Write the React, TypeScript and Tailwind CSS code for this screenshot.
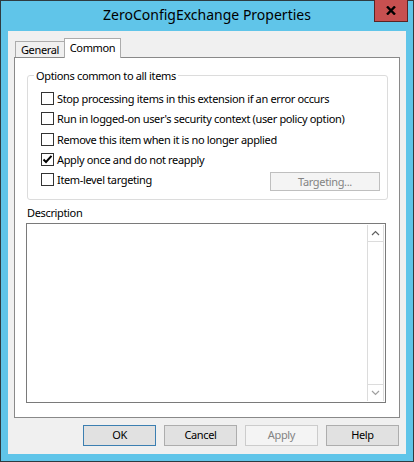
import React from "react";

function Checkbox({ checked }: { checked?: boolean }) {
  return (
    <div className="w-[13px] h-[13px] border border-[#333333] bg-white flex items-center justify-center shrink-0">
      {checked && (
        <svg width="11" height="11" viewBox="0 0 11 11">
          <path d="M1.5 5.5 L4 8 L9.5 1.8" fill="none" stroke="#000" strokeWidth="2" />
        </svg>
      )}
    </div>
  );
}

function Row({ label, checked, className }: { label: string; checked?: boolean; className: string }) {
  return (
    <div className={"flex items-center h-[13px] " + className}>
      <Checkbox checked={checked} />
      <span className="ml-[3px] leading-[13px] whitespace-nowrap">{label}</span>
    </div>
  );
}

export default function App() {
  return (
    <div className="w-[414px] h-[462px] bg-[#60c5e9] border border-[#2e3b40] flex flex-col font-['Noto_Sans','DejaVu_Sans',sans-serif] text-[11px] tracking-[-0.35px] text-black">
      <div className="relative h-[30px] flex items-center justify-center">
        <span className="text-[14px] tracking-normal leading-[18px] pb-[2px]">ZeroConfigExchange Properties</span>
        <div className="absolute right-[5px] top-[-1px] w-[34px] h-[22px] bg-[#c75050] border border-t-0 border-[#5a2424] flex items-center justify-center">
          <svg width="10" height="9" viewBox="0 0 10 9">
            <path d="M1 0.5 L9 8.5 M9 0.5 L1 8.5" stroke="#000" strokeWidth="2.4" />
          </svg>
        </div>
      </div>
      <div className="mx-[7px] h-[423px] bg-[#f0f0f0] flex flex-col">
        <div className="mt-[7px] ml-[7px] h-[19px] flex items-end">
          <div className="w-[49px] h-[16px] border border-b-0 border-r-0 border-[#acacac] bg-[#f0f0f0] flex items-center justify-center pt-[1px]">
            <span className="leading-[14px]">General</span>
          </div>
          <div className="relative z-10 w-[57px] h-[20px] -mb-[1px] border border-b-0 border-[#acacac] bg-white flex justify-center pt-[2px]">
            <span className="leading-[14px]">Common</span>
          </div>
        </div>
        <div className="ml-[6px] w-[386px] h-[361px] border border-[#898989] bg-white flex flex-col">
          <div className="relative ml-[12px] mt-[17px] w-[361px] border border-[#dcdcdc] rounded-[3px] pt-[16px] pl-[13px] pr-[7px] pb-[8px]">
            <span className="absolute left-[6px] -top-[8px] bg-white px-[2px] leading-[15px]">Options common to all items</span>
            <Row label="Stop processing items in this extension if an error occurs" className="" />
            <Row label="Run in logged-on user's security context (user policy option)" className="mt-[7px]" />
            <Row label="Remove this item when it is no longer applied" className="mt-[8px]" />
            <Row label="Apply once and do not reapply" checked className="mt-[7px]" />
            <div className="mt-[7px] flex items-start justify-between">
              <div className="flex items-center h-[13px]">
                <Checkbox />
                <span className="ml-[3px] leading-[13px] whitespace-nowrap">Item-level targeting</span>
              </div>
              <div className="-mt-[1px] w-[110px] h-[19px] border border-[#bfbfbf] bg-[#f4f4f4] text-[#838383] flex items-center justify-center">
                <span className="leading-[14px]">Targeting...</span>
              </div>
            </div>
          </div>
          <div className="ml-[12px] mt-[5px] leading-[15px]">Description</div>
          <div className="ml-[11px] mt-[3px] w-[360px] h-[180px] border border-[#7a7a7a] bg-white flex justify-end">
            <div className="mt-[1px] mb-[1px] mr-[1px] w-[17px] border-x border-[#dcdcdc] flex flex-col justify-between">
              <div className="h-[17px] border-b border-[#dcdcdc] flex items-center justify-center">
                <svg width="9" height="6" viewBox="0 0 9 6">
                  <path d="M1 5 L4.5 1.5 L8 5" fill="none" stroke="#606060" strokeWidth="1.2" />
                </svg>
              </div>
              <div className="h-[17px] border-t border-[#dcdcdc] flex items-center justify-center">
                <svg width="9" height="6" viewBox="0 0 9 6">
                  <path d="M1 1 L4.5 4.5 L8 1" fill="none" stroke="#a0a0a0" strokeWidth="1.2" />
                </svg>
              </div>
            </div>
          </div>
        </div>
        <div className="mt-[7px] mr-[7px] flex justify-end gap-[8px]">
          <div className="w-[73px] h-[21px] border border-[#3c7fb1] bg-[#e1e1e1] flex items-center justify-center">OK</div>
          <div className="w-[73px] h-[21px] border border-[#adadad] bg-[#e1e1e1] flex items-center justify-center">Cancel</div>
          <div className="w-[73px] h-[21px] border border-[#cccccc] bg-[#f4f4f4] text-[#838383] flex items-center justify-center">Apply</div>
          <div className="w-[73px] h-[21px] border border-[#adadad] bg-[#e1e1e1] flex items-center justify-center">Help</div>
        </div>
      </div>
    </div>
  );
}
